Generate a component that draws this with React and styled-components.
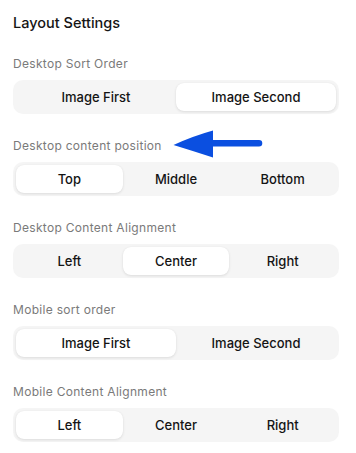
import React from "react";
import styled, { createGlobalStyle } from "styled-components";

const Global = createGlobalStyle`
  html, body { margin: 0; padding: 0; background: #ffffff; }
  body { font-family: Inter, "Noto Sans", sans-serif; color: #111; }
`;

const Page = styled.div`
  position: relative;
  width: 356px;
  box-sizing: border-box;
  padding: 13px 17px 0 13px;
`;

const Title = styled.h2`
  margin: 0 0 23px;
  font-size: 14.5px;
  line-height: 20px;
  font-weight: 500;
  color: #151515;
`;

const Section = styled.section`
  display: flex;
  flex-direction: column;
  gap: 8px;
  margin-bottom: 24px;
  &:last-of-type {
    margin-bottom: 0;
  }
`;

const Label = styled.div`
  font-size: 12px;
  line-height: 16px;
  letter-spacing: 0.3px;
  color: #7a7a7a;
  font-weight: 400;
`;

const Segment = styled.div`
  display: grid;
  grid-template-columns: repeat(${(p) => p.$count}, 1fr);
  padding: 3px;
  background: #f5f5f5;
  border-radius: 10px;
`;

const Option = styled.button`
  height: 28px;
  border: none;
  border-radius: 8px;
  font-family: inherit;
  font-size: 13px;
  font-weight: 500;
  color: #141414;
  cursor: pointer;
  background: ${(p) => (p.$active ? "#ffffff" : "transparent")};
  box-shadow: ${(p) =>
    p.$active ? "0 1px 3px rgba(0,0,0,0.10), 0 0 1px rgba(0,0,0,0.06)" : "none"};
`;

const Arrow = styled.svg`
  position: absolute;
  left: 170px;
  top: 128px;
  width: 96px;
  height: 32px;
`;

const groups = [
  { label: "Desktop Sort Order", options: ["Image First", "Image Second"], active: 1 },
  { label: "Desktop content position", options: ["Top", "Middle", "Bottom"], active: 0 },
  { label: "Desktop Content Alignment", options: ["Left", "Center", "Right"], active: 1 },
  { label: "Mobile sort order", options: ["Image First", "Image Second"], active: 0 },
  { label: "Mobile Content Alignment", options: ["Left", "Center", "Right"], active: 0 },
];

export default function App() {
  return (
    <>
      <Global />
      <Page>
        <Title>Layout Settings</Title>
        {groups.map((g) => (
          <Section key={g.label}>
            <Label>{g.label}</Label>
            <Segment $count={g.options.length}>
              {g.options.map((o, i) => (
                <Option key={o} $active={i === g.active}>
                  {o}
                </Option>
              ))}
            </Segment>
          </Section>
        ))}
        <Arrow viewBox="170 128 96 32">
          <path
            d="M173.5 145 Q193 136 213 130.5 L213 140 L259 140 A3.2 3.2 0 0 1 259 146.6 L213 146.6 L213 157.5 Q193 151 173.5 145 Z"
            fill="#0b4fe0"
          />
        </Arrow>
      </Page>
    </>
  );
}
